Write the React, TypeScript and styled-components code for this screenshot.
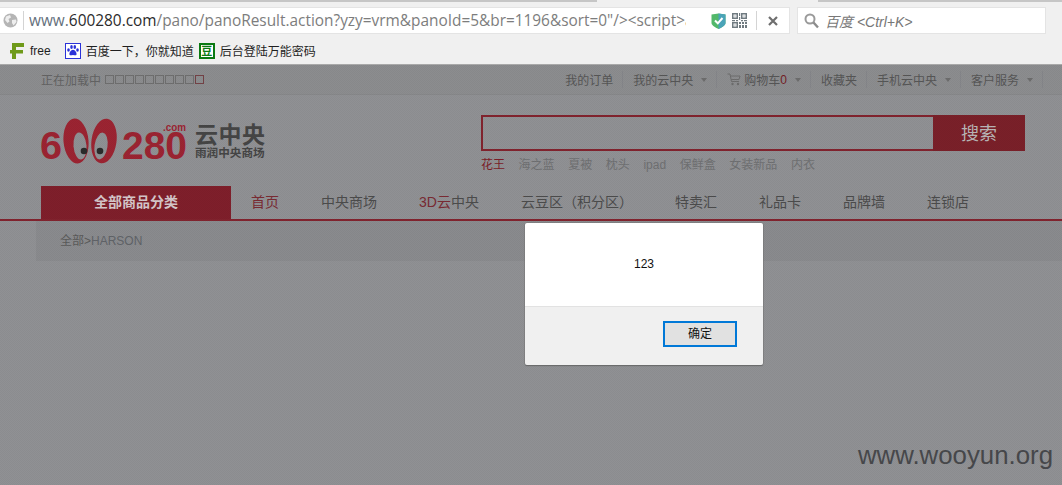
import React from "react";
import styled, { createGlobalStyle } from "styled-components";

const CJK = `"Liberation Sans", "Noto Sans CJK SC", sans-serif`;

const GlobalStyle = createGlobalStyle`
  html, body {
    margin: 0;
    padding: 0;
    overflow: hidden;
    background: #909194;
  }
  * {
    box-sizing: border-box;
  }
`;

const Screen = styled.div`
  position: relative;
  width: 1062px;
  height: 485px;
  overflow: hidden;
  display: flex;
  flex-direction: column;
  font-family: ${CJK};
`;

/* browser chrome */
const Chrome = styled.div`
  height: 65px;
  flex: none;
  background: #f0f0f0;
  border-bottom: 1px solid #a9a9a9;
  display: flex;
  flex-direction: column;
`;

const TabStrip = styled.div`
  height: 7px;
  flex: none;
  display: flex;
  align-items: flex-start;
`;

const TabEdge = styled.div`
  height: 2px;
  background: #c6c6c6;
  flex: 1;
`;

const ActiveTab = styled.div`
  width: 221px;
  flex: none;
`;

const AddressRow = styled.div`
  height: 27px;
  flex: none;
  display: flex;
  gap: 7px;
`;

const UrlBox = styled.div`
  width: 790px;
  flex: none;
  background: #fff;
  border: 1px solid #e4e4e4;
  border-left: none;
  display: flex;
  align-items: center;
  padding-left: 3px;
`;

const Divider = styled.div`
  width: 1px;
  height: 19px;
  background: #d4d4d4;
  flex: none;
`;

const UrlText = styled.div`
  width: 657px;
  margin-left: 5px;
  flex: none;
  overflow: hidden;
  white-space: nowrap;
  font-family: "Open Sans", sans-serif;
  font-size: 15.4px;
  color: #7d7d7d;
`;

const UrlHost = styled.span`
  color: #2b2b2b;
`;

const UrlScheme = styled.span`
  color: #64707c;
`;

const UrlTools = styled.div`
  display: flex;
  align-items: center;
  margin-left: 25px;
`;

const SearchBox = styled.div`
  width: 249px;
  flex: none;
  background: #fff;
  border: 1px solid #e4e4e4;
  display: flex;
  align-items: center;
  padding-left: 6px;
  gap: 6px;
`;

const SearchHint = styled.span`
  font-style: italic;
  font-size: 14px;
  color: #777;
  white-space: nowrap;
`;

const ToolGlyph = styled.div`
  width: 16px;
  margin-left: 12px;
  height: 27px;
  flex: none;
  display: flex;
  align-items: center;
`;

const BookmarkBar = styled.div`
  flex: 1;
  display: flex;
  align-items: center;
  padding: 3px 0 0 10px;
  font-size: 12px;
  color: #1f1f1f;
`;

const Bookmark = styled.div<{ $gap: number }>`
  display: flex;
  align-items: center;
  gap: ${(p) => p.$gap}px;
  margin-right: 5px;
  white-space: nowrap;
`;

const BeanIcon = styled.div`
  width: 16px;
  height: 16px;
  background: #fff;
  border: 2px solid #0b7a12;
  color: #0b7a12;
  font-size: 11px;
  font-weight: 700;
  line-height: 12px;
  text-align: center;
`;

/* page behind the alert */
const Page = styled.div`
  flex: 1;
  background: #909194;
  display: flex;
  flex-direction: column;
  color: #565656;
  font-size: 12px;
`;

const TopBar = styled.div`
  height: 30px;
  flex: none;
  background: #8c8d8f;
  border-bottom: 1px solid #87888a;
  display: flex;
  align-items: center;
  justify-content: space-between;
  padding: 0 19px 0 41px;
`;

const Loading = styled.div`
  display: flex;
  align-items: center;
  color: #636363;
  gap: 1px;
`;

const LoadingLabel = styled.span`
  margin-right: 3px;
`;

const MissingGlyph = styled.i<{ $red?: boolean }>`
  width: 9px;
  height: 9px;
  border: 1px solid ${(p) => (p.$red ? "#744246" : "#6f6f6f")};
`;

const TopLinks = styled.div`
  display: flex;
  align-items: center;
  color: #565656;
`;

const TopLink = styled.div`
  display: flex;
  align-items: center;
  height: 17px;
  padding: 0 9px 0 10px;
  border-right: 1px solid #85868a;
  white-space: nowrap;
`;

const CartCount = styled.span`
  color: #742025;
`;

const Caret = styled.i`
  width: 0;
  height: 0;
  margin-left: 8px;
  border-left: 3.5px solid transparent;
  border-right: 3.5px solid transparent;
  border-top: 4px solid #6d6d6d;
`;

const Header = styled.div`
  height: 91px;
  flex: none;
  display: flex;
  padding-left: 41px;
`;

const LogoBlock = styled.div`
  width: 440px;
  flex: none;
  display: flex;
  padding-top: 23px;
`;

const LogoWords = styled.div`
  margin: 6px 0 0 8px;
  display: flex;
  flex-direction: column;
  color: #454545;
  font-weight: 700;
`;

const LogoName = styled.div`
  font-size: 23px;
  line-height: 22px;
  letter-spacing: 0.5px;
`;

const LogoSlogan = styled.div`
  font-size: 11.6px;
  line-height: 12px;
  margin-top: 1px;
`;

const SearchColumn = styled.div`
  padding-top: 20px;
`;

const SiteSearch = styled.div`
  width: 544px;
  height: 36px;
  border: 2px solid #82232e;
  display: flex;
  justify-content: flex-end;
`;

const SiteSearchButton = styled.div`
  width: 92px;
  margin: -2px -2px -2px 0;
  background: #7a2029;
  color: #b9b5b6;
  font-size: 18px;
  line-height: 38px;
  text-align: center;
`;

const HotWords = styled.div`
  display: flex;
  gap: 13.6px;
  margin-top: 6px;
  height: 16px;
  line-height: 16px;
  color: #6f7072;
`;

const HotWord = styled.span<{ $active?: boolean }>`
  color: ${(p) => (p.$active ? "#7c1c27" : "#6f7072")};
`;

const NavBar = styled.div`
  height: 35px;
  flex: none;
  border-bottom: 2px solid #82232e;
  padding-left: 41px;
  display: flex;
  font-size: 14px;
`;

const CategoryTab = styled.div`
  width: 190px;
  flex: none;
  background: #7f1f2b;
  color: #d6c7ca;
  font-weight: 700;
  line-height: 33px;
  text-align: center;
`;

const NavLinks = styled.div`
  display: flex;
  gap: 42px;
  padding-left: 20px;
  line-height: 33px;
  white-space: nowrap;
  color: #4c4c4c;
`;

const NavLink = styled.span<{ $active?: boolean }>`
  color: ${(p) => (p.$active ? "#7a2b33" : "#4c4c4c")};
`;

const NavAccent = styled.span`
  color: #7a2b33;
`;

const Crumbs = styled.div`
  height: 40px;
  flex: none;
  margin-left: 36px;
  padding-left: 24px;
  background: #8a8b8e;
  line-height: 40px;
  color: #5a5a5a;
`;

const CrumbLeaf = styled.span`
  color: #606368;
`;

/* things over the page */
const Dither = styled.div`
  position: absolute;
  left: 0;
  right: 0;
  top: 65px;
  bottom: 0;
  pointer-events: none;
  background: repeating-conic-gradient(rgba(0, 0, 0, 0.035) 0 25%, transparent 0 50%) 0 0 / 2px 2px;
`;

const Watermark = styled.div`
  position: absolute;
  right: 9px;
  top: 440px;
  font-size: 25.8px;
  line-height: 30px;
  color: #46474a;
`;

const Alert = styled.div`
  position: absolute;
  left: 525px;
  top: 223px;
  width: 238px;
  height: 142px;
  border-radius: 2px;
  overflow: hidden;
  box-shadow: 0 0 0 0.5px #777, 0 1px 1px rgba(0, 0, 0, 0.35);
  display: flex;
  flex-direction: column;
`;

const AlertBody = styled.div`
  height: 83px;
  flex: none;
  background: #fff;
  color: #111;
  font-size: 12px;
  text-align: center;
  line-height: 83px;
`;

const AlertFooter = styled.div`
  flex: 1;
  background: #f0f0f0;
  border-top: 1px solid #e2e2e2;
  display: flex;
  justify-content: flex-end;
  padding: 14px 26px 0 0;
`;

const AlertButton = styled.div`
  width: 74px;
  height: 26px;
  background: #e1e1e1;
  border: 2px solid #0078d7;
  color: #111;
  font-size: 12px;
  line-height: 22px;
  text-align: center;
`;

const Globe = () => (
  <svg width="15" height="15" viewBox="0 0 15 15" style={{ flex: "none", marginRight: 5 }}>
    <circle cx="7.5" cy="7.5" r="7" fill="#b5b5b5" />
    <path d="M3 3.5 L7 2 L8 4.5 L5.5 6 L6.5 8.5 L4.5 10 L2 7 Z M9 7 L13 6.5 L13.5 9 L10.5 12.5 L9 10 Z" fill="#eeeeee" />
  </svg>
);

const Shield = () => (
  <svg width="15" height="16" viewBox="0 0 15 16" style={{ flex: "none" }}>
    <path d="M0.5 1.5 L7.5 0.5 L14.5 1.5 V10 C14.5 12.5 10 15 7.5 16 C5 15 0.5 12.5 0.5 10 Z" fill="#52b86a" />
    <path d="M7.5 0.5 L14.5 1.5 V10 C14.5 12.5 10 15 7.5 16 Z" fill="#4aa3b8" />
    <path d="M4 7.5 L6.8 10.3 L11.5 5" fill="none" stroke="#fff" strokeWidth="2" />
  </svg>
);

const QrCode = () => (
  <svg width="15" height="15" viewBox="0 0 15 15" style={{ flex: "none", margin: "0 9px 0 6px" }} fill="#6f7a80">
    <path d="M0 0h6v6H0z M1.5 1.5v3h3v-3z M9 0h6v6H9z M10.500 1.500v3h3v-3z M0 9h6v6H0z M1.500 10.500v3h3v-3z" fillRule="evenodd" />
    <path d="M2.500 2.500h1v1h-1z M11.500 2.500h1v1h-1z M2.500 11.500h1v1h-1z M7 0h1.200v3H7z M7 4h1.200v3H7z M0 7h3v1.200H0z M4 7h2v1.200H4z M9 7h2v1.200H9z M12 7h3v1.200h-3z M7 9h2v2H7z M10 9h2v2h-2z M13 9h2v2h-2z M7 12h2v3H7z M10 12h2v3h-2z M13 12h2v3h-2z" />
  </svg>
);

const CloseMark = () => (
  <svg width="10" height="10" viewBox="0 0 10 10" style={{ flex: "none", marginLeft: 11 }}>
    <path d="M1 1 L9 9 M9 1 L1 9" stroke="#6e6e6e" strokeWidth="2.2" />
  </svg>
);

const Magnifier = () => (
  <svg width="15" height="16" viewBox="0 0 15 16" style={{ flex: "none" }}>
    <circle cx="6" cy="6" r="4.500" fill="none" stroke="#9a9a9a" strokeWidth="2" />
    <path d="M9.500 9.500 L14 14.500" stroke="#8c8c8c" strokeWidth="2.400" />
  </svg>
);

const MenuGlyph = () => (
  <svg width="6" height="12" viewBox="0 0 6 12">
    <path d="M0 2h6v2H0z M1 7h5v3H1z" fill="#333" />
  </svg>
);

const FreeIcon = () => (
  <svg width="14" height="16" viewBox="0 0 14 16" style={{ flex: "none" }}>
    <path d="M2 0h12v4H6v3h7v3.500H6V16H2V10.500H0V7h2z" fill="#6f9a1a" />
  </svg>
);

const PawIcon = () => (
  <svg width="16" height="16" viewBox="0 0 16 16" style={{ flex: "none" }}>
    <rect x="0.500" y="0.500" width="15" height="15" fill="#fff" stroke="#2a32d8" />
    <g fill="#2a32d8">
      <ellipse cx="3.500" cy="7" rx="1.300" ry="1.800" />
      <ellipse cx="6.500" cy="4" rx="1.300" ry="1.900" />
      <ellipse cx="9.800" cy="4" rx="1.300" ry="1.900" />
      <ellipse cx="12.500" cy="7" rx="1.300" ry="1.800" />
      <path d="M8 6.800 C10 6.800 12 10 11.500 11.500 C11 13 9 12 8 12 C7 12 5 13 4.500 11.500 C4 10 6 6.800 8 6.800 Z" />
    </g>
  </svg>
);

const CartIcon = () => (
  <svg width="14" height="13" viewBox="0 0 14 13" style={{ flex: "none", marginRight: 3 }}>
    <path d="M0.500 1 H3 L4.500 8.500 H12 M3.500 3 H13 L12 6.500 H4.200" fill="none" stroke="#6d6d6d" />
    <circle cx="5.500" cy="11" r="1.200" fill="#6d6d6d" />
    <circle cx="11" cy="11" r="1.200" fill="#6d6d6d" />
  </svg>
);

const LogoMark = () => (
  <svg width="146" height="46" viewBox="0 0 146 46" style={{ flex: "none", marginTop: 0 }}>
    <text x="-1" y="41" fontFamily="Liberation Sans" fontWeight="700" fontSize="38" textLength="22" lengthAdjust="spacingAndGlyphs" fill="#9c2432">6</text>
    <ellipse cx="35" cy="23" rx="12.500" ry="22.500" transform="rotate(-5 35 23)" fill="#9c2432" />
    <ellipse cx="39" cy="28" rx="6.500" ry="13.500" transform="rotate(-5 39 28)" fill="#8f9194" />
    <ellipse cx="63" cy="23" rx="12.500" ry="22.500" transform="rotate(8 63 23)" fill="#9c2432" />
    <ellipse cx="60" cy="28" rx="6.500" ry="13.500" transform="rotate(8 60 28)" fill="#8f9194" />
    <circle cx="43" cy="33" r="3.300" fill="#2b2b2b" />
    <circle cx="59" cy="33" r="3.300" fill="#2b2b2b" />
    <text x="81" y="41" fontFamily="Liberation Sans" fontWeight="700" fontSize="38" textLength="65" lengthAdjust="spacingAndGlyphs" fill="#9c2432">280</text>
    <text x="122" y="13" fontFamily="Liberation Sans" fontWeight="700" fontSize="11" textLength="23" lengthAdjust="spacingAndGlyphs" fill="#9c2432">.com</text>
  </svg>
);

const hotWords = ["海之蓝", "夏被", "枕头", "ipad", "保鲜盒", "女装新品", "内衣"];

export default function App() {
  return (
    <Screen>
      <GlobalStyle />
      <Chrome>
        <TabStrip>
          <TabEdge />
          <ActiveTab />
          <TabEdge style={{ flex: "0 0 244px" }} />
        </TabStrip>
        <AddressRow>
          <UrlBox>
            <Globe />
            <Divider />
            <UrlText>
              <UrlScheme>www.</UrlScheme>
              <UrlHost>600280.com</UrlHost>
              /pano/panoResult.action?yzy=vrm&amp;panoId=5&amp;br=1196&amp;sort=0"/&gt;&lt;script&gt;alert(
            </UrlText>
            <UrlTools>
              <Shield />
              <QrCode />
              <Divider />
              <CloseMark />
            </UrlTools>
          </UrlBox>
          <SearchBox>
            <Magnifier />
            <SearchHint>百度 &lt;Ctrl+K&gt;</SearchHint>
          </SearchBox>
          <ToolGlyph>
            <MenuGlyph />
          </ToolGlyph>
        </AddressRow>
        <BookmarkBar>
          <Bookmark $gap={6} style={{ marginRight: 14 }}>
            <FreeIcon />
            free
          </Bookmark>
          <Bookmark $gap={5}>
            <PawIcon />
            百度一下，你就知道
          </Bookmark>
          <Bookmark $gap={5}>
            <BeanIcon>豆</BeanIcon>
            后台登陆万能密码
          </Bookmark>
        </BookmarkBar>
      </Chrome>

      <Page>
        <TopBar>
          <Loading>
            <LoadingLabel>正在加载中</LoadingLabel>
            {Array.from({ length: 10 }, (_, i) => (
              <MissingGlyph key={i} $red={i === 9} />
            ))}
          </Loading>
          <TopLinks>
            <TopLink>我的订单</TopLink>
            <TopLink>
              我的云中央
              <Caret />
            </TopLink>
            <TopLink>
              <CartIcon />
              购物车<CartCount>0</CartCount>
              <Caret />
            </TopLink>
            <TopLink>收藏夹</TopLink>
            <TopLink>
              手机云中央
              <Caret />
            </TopLink>
            <TopLink>
              客户服务
              <Caret />
            </TopLink>
          </TopLinks>
        </TopBar>

        <Header>
          <LogoBlock>
            <LogoMark />
            <LogoWords>
              <LogoName>云中央</LogoName>
              <LogoSlogan>雨润中央商场</LogoSlogan>
            </LogoWords>
          </LogoBlock>
          <SearchColumn>
            <SiteSearch>
              <SiteSearchButton>搜索</SiteSearchButton>
            </SiteSearch>
            <HotWords>
              <HotWord $active>花王</HotWord>
              {hotWords.map((w) => (
                <HotWord key={w}>{w}</HotWord>
              ))}
            </HotWords>
          </SearchColumn>
        </Header>

        <NavBar>
          <CategoryTab>全部商品分类</CategoryTab>
          <NavLinks>
            <NavLink $active>首页</NavLink>
            <NavLink>中央商场</NavLink>
            <NavLink>
              <NavAccent>3D云</NavAccent>中央
            </NavLink>
            <NavLink>云豆区（积分区）</NavLink>
            <NavLink>特卖汇</NavLink>
            <NavLink>礼品卡</NavLink>
            <NavLink>品牌墙</NavLink>
            <NavLink>连锁店</NavLink>
          </NavLinks>
        </NavBar>

        <Crumbs>
          全部&gt;<CrumbLeaf>HARSON</CrumbLeaf>
        </Crumbs>
      </Page>

      <Dither />
      <Watermark>www.wooyun.org</Watermark>

      <Alert>
        <AlertBody>123</AlertBody>
        <AlertFooter>
          <AlertButton>确定</AlertButton>
        </AlertFooter>
      </Alert>
    </Screen>
  );
}
